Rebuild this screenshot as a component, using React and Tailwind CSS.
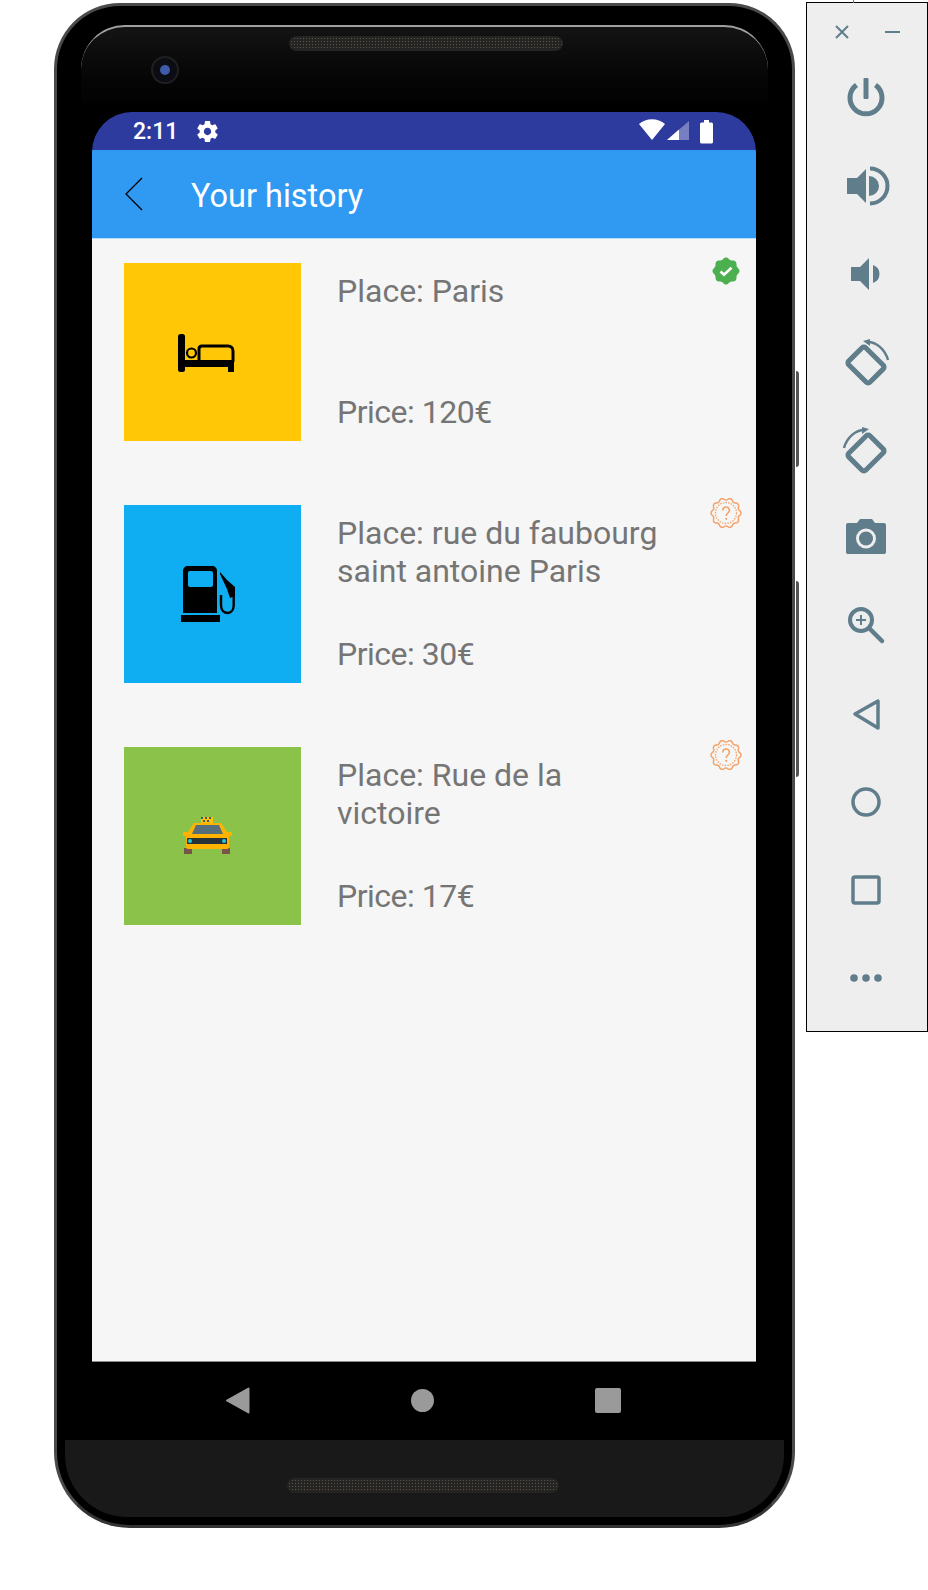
const font = { roboto: 'font-["Roboto",sans-serif]' };

function BedIcon() {
  return (
    <svg width="84" height="84" viewBox="0 0 84 84">
      <rect x="7" y="24" width="7" height="38" rx="2.500" fill="#000" />
      <path d="M12 50H63V62H57V57H12Z" fill="#000" />
      <circle cx="20.500" cy="43" r="4.500" fill="none" stroke="#000" stroke-width="2.200" />
      <path d="M28 51V39C28 37 29 36 31 36H57C60 36 62 38 62 41V52" fill="none" stroke="#000" stroke-width="3" />
    </svg>
  );
}

function PumpIcon() {
  return (
    <svg width="84" height="84" viewBox="0 0 84 84">
      <path fill-rule="evenodd" d="M17 14H41C44 14 46 16 46 19V61H12V19C12 16 14 14 17 14ZM19 19C17.900 19 17 19.900 17 21V33C17 34.100 17.900 35 19 35H40C41.100 35 42 34.100 42 33V21C42 19.900 41.100 19 40 19Z" fill="#000" />
      <rect x="10" y="63" width="39" height="7" fill="#000" />
      <path d="M49 20L56 28L64 35V44L59 46L56 37L49 22Z" fill="#000" />
      <path d="M62.700 44V53C62.700 58 60 61 56.700 61C53 61 50 58 50 53V43" fill="none" stroke="#000" stroke-width="2.400" />
    </svg>
  );
}

function TaxiIcon() {
  return (
    <svg width="84" height="84" viewBox="0 0 84 84">
      <rect x="13" y="54" width="8" height="6" fill="#795548" />
      <rect x="51" y="54" width="8" height="6" fill="#795548" />
      <rect x="30" y="23" width="12" height="6" fill="#ffc107" />
      <path d="M30 23h2v2h-2zM34 23h2v2h-2zM38 23h2v2h-2zM32 26h2v2h-2zM36 26h2v2h-2z" fill="#455a64" />
      <path d="M23 29H50L56 38H60C61.500 38 61.500 42 60 42H58V53C58 54 57 55 56 55H17C16 55 15 54 15 53V42H13C11.500 42 11.500 38 13 38H17Z" fill="#ffb300" />
      <path d="M25 31H48L52 40H21Z" fill="#546e7a" />
      <rect x="16" y="44" width="40" height="6" fill="#263238" />
      <circle cx="19" cy="47" r="2" fill="#26c6da" />
      <circle cx="53" cy="47" r="2" fill="#26c6da" />
    </svg>
  );
}

function badgePath(cx, cy, r, lobes, depth) {
  let d = '';
  for (let i = 0; i <= 120; i++) {
    const a = (i / 120) * Math.PI * 2;
    const rr = r + depth * Math.cos(a * lobes);
    d += `${i ? 'L' : 'M'}${(cx + rr * Math.cos(a)).toFixed(2)} ${(cy + rr * Math.sin(a)).toFixed(2)}`;
  }
  return d + 'Z';
}

function DoneBadge() {
  return (
    <svg width="30" height="30" viewBox="0 0 30 30">
      <path d={badgePath(15, 15, 12.600, 8, 0.900)} fill="#4caf50" />
      <path d="M9.500 15.500L13 18.800L20.500 11.800" fill="none" stroke="#fff" stroke-width="2.600" />
    </svg>
  );
}

function PendingBadge() {
  return (
    <svg width="34" height="34" viewBox="0 0 34 34">
      <path d={badgePath(17, 17, 14, 10, 1)} fill="none" stroke="#f4a26a" stroke-width="1.500" />
      <circle cx="17" cy="17" r="10.500" fill="none" stroke="#f4a26a" stroke-width="1.300" stroke-dasharray="1.500 1.200" />
      <path d="M13.800 14.500C13.800 9.800 20.400 10 20.400 14.300C20.400 17 17.200 17 17.200 20" fill="none" stroke="#f4a26a" stroke-width="1.600" />
      <circle cx="17.200" cy="22.800" r="1.100" fill="#f4a26a" />
    </svg>
  );
}

const rows = [
  { place: 'Place: Paris', price: 'Price: 120€', color: 'bg-[#ffc706]', icon: <BedIcon />, badge: <DoneBadge /> },
  { place: 'Place: rue du faubourg saint antoine Paris', price: 'Price: 30€', color: 'bg-[#0fadf1]', icon: <PumpIcon />, badge: <PendingBadge /> },
  { place: 'Place: Rue de la victoire', price: 'Price: 17€', color: 'bg-[#8bc34a]', icon: <TaxiIcon />, badge: <PendingBadge /> },
];

function HistoryRow({ row }) {
  return (
    <div className="flex h-[177.500px] items-start">
      <div className={`flex h-full w-[177px] shrink-0 items-center justify-center ${row.color}`}>{row.icon}</div>
      <div className="ml-[36px] flex h-full w-[330px] flex-col justify-between pt-[10px] pb-[9px] text-[32px] leading-[37.500px] text-[#757575]">
        <div>{row.place}</div>
        <div className="tracking-[-0.5px]">{row.price}</div>
      </div>
      <div className="-mt-[9px] ml-[42px] flex h-[34px] w-[34px] items-center justify-center">{row.badge}</div>
    </div>
  );
}

function StatusBar() {
  return (
    <div className="flex h-[38px] shrink-0 items-center justify-between bg-[#2e3b9e] pl-[41px] pr-[43px] text-white">
      <div className="flex items-center">
        <span className="text-[23px] font-medium leading-none">2:11</span>
        <svg className="ml-[17px]" width="25" height="25" viewBox="0 0 24 24" fill="#fff">
          <path d="M19.430 12.980c.04-.32.07-.64.07-.98s-.03-.66-.07-.98l2.110-1.650c.19-.15.24-.42.12-.64l-2-3.460c-.12-.22-.39-.3-.61-.22l-2.490 1c-.52-.4-1.080-.73-1.690-.98l-.38-2.650C14.460 2.180 14.250 2 14 2h-4c-.25 0-.46.18-.49.42l-.38 2.650c-.61.25-1.170.59-1.690.98l-2.490-1c-.23-.09-.49 0-.61.22l-2 3.460c-.13.22-.07.49.12.64l2.110 1.650c-.04.32-.07.65-.07.98s.03.66.07.98l-2.110 1.650c-.19.15-.24.42-.12.64l2 3.460c.12.22.39.3.61.22l2.490-1c.52.4 1.080.73 1.690.98l.38 2.650c.03.24.24.42.49.42h4c.25 0 .46-.18.49-.42l.38-2.650c.61-.25 1.170-.59 1.690-.98l2.490 1c.23.09.49 0 .61-.22l2-3.460c.12-.22.07-.49-.12-.64l-2.110-1.650zM12 15.500c-1.930 0-3.500-1.570-3.500-3.500s1.570-3.500 3.500-3.500 3.500 1.570 3.500 3.500-1.570 3.500-3.500 3.500z" />
        </svg>
      </div>
      <svg width="74" height="26" viewBox="0 0 74 26">
        <path d="M0 6C7 -0.500 19 -0.500 26 6L13 22Z" fill="#fff" />
        <path d="M28 22L50 3V22Z" fill="#fff" fill-opacity="0.350" />
        <path d="M28 22L40 11.500V22Z" fill="#fff" />
        <path d="M61 6C61 5 62 4.500 63 4.500H65V2H70V4.500H72C73 4.500 74 5 74 6V24C74 25 73 25.500 72 25.500H63C62 25.500 61 25 61 24Z" fill="#fff" />
      </svg>
    </div>
  );
}

function NavBar() {
  return (
    <div className="flex h-[79px] shrink-0 items-center justify-center gap-[159px] border-t border-[#8a8a8a] bg-black pb-[2px] pr-[3px]">
      <svg width="26" height="27" viewBox="0 0 26 27">
        <path d="M2 13.500L23.500 1.500V25.500Z" fill="#9a9a9a" stroke="#9a9a9a" stroke-width="2" stroke-linejoin="round" />
      </svg>
      <div className="mx-[1.500px] h-[23px] w-[23px] rounded-full bg-[#9a9a9a]" />
      <div className="h-[25px] w-[26px] rounded-[2px] bg-[#9a9a9a]" />
    </div>
  );
}

function Speaker({ className }) {
  return (
    <div className={`h-[15px] rounded-full border border-[#242424] bg-[#2c2a27] bg-[radial-gradient(#5c5850_1px,#262422_1px)] bg-[length:3px_3px] ${className}`} />
  );
}

function Phone() {
  return (
    <div className="relative ml-[54px] mt-[3px] h-[1525px] w-[741px] shrink-0">
      <div className="absolute right-[-4px] top-[368px] h-[96px] w-[3px] rounded-r bg-[#555555]" />
      <div className="absolute right-[-4px] top-[578px] h-[196px] w-[3px] rounded-r bg-[#555555]" />
      <div className="relative flex h-full flex-col overflow-hidden rounded-t-[66px] rounded-b-[76px] border-[3px] border-[#4a4a4a] border-b-[#333333] bg-black pl-[35px] pr-[36px]">
        <div className="absolute inset-x-[24px] top-[19px] h-[78px] rounded-t-[44px] border-t-2 border-[#a0a0a0] bg-gradient-to-b from-[#141414] to-[#020202]" />
        <div className="absolute inset-x-[8px] bottom-[8px] h-[77px] rounded-b-[62px] bg-[#191919]" />

        <div className="relative flex h-[106px] shrink-0 items-center">
          <div className="absolute left-[59px] top-[50px] flex h-[28px] w-[28px] items-center justify-center rounded-full border-2 border-[#202020] bg-[#0c0c14]">
            <div className="h-[10px] w-[10px] rounded-full bg-[#3f5aa8]" />
          </div>
          <Speaker className="absolute left-[197px] top-[30px] w-[274px]" />
        </div>

        <div className="relative flex h-[1328px] shrink-0 flex-col overflow-hidden rounded-[40px] bg-black">
          <StatusBar />
          <div className="flex h-[89px] shrink-0 items-center border-b border-[#b9dcf8] bg-[#309af2] pl-[33px] pt-[4px] text-[32.500px] text-white">
            <svg className="-mt-[4px]" width="18" height="34" viewBox="0 0 18 34">
              <path d="M17 1L1 17L17 33" fill="none" stroke="#000" stroke-width="1.300" />
            </svg>
            <span className="ml-[48px]">Your history</span>
          </div>
          <div className="flex flex-1 flex-col gap-[64.500px] bg-[#f6f6f6] pl-[32px] pt-[24px]">
            {rows.map((row) => (
              <HistoryRow key={row.place} row={row} />
            ))}
          </div>
          <NavBar />
        </div>

        <div className="relative flex-1">
          <Speaker className="absolute left-[195px] top-[38px] w-[272px]" />
        </div>
      </div>
    </div>
  );
}

const ink = '#607d8b';

function Box({ children }) {
  return (
    <div className="flex h-[88px] items-center justify-center">
      <svg width="48" height="48" viewBox="0 0 48 48" fill={ink}>
        {children}
      </svg>
    </div>
  );
}

function SidePanel() {
  return (
    <div className="relative ml-[11px] mt-[2px] h-[1030px] w-[122px] shrink-0 self-start border border-black bg-[#eeeeee]">
      <div className="absolute left-[46px] top-[-3px] h-[3px] w-[1px] bg-[#777]" />
      <div className="flex h-[51px] items-center justify-between pl-[27px] pr-[27px] pt-[7px]">
        <svg width="16" height="16" viewBox="0 0 16 16">
          <path d="M2 2L14 14M14 2L2 14" stroke={ink} stroke-width="2" />
        </svg>
        <div className="h-[2px] w-[15px] bg-[#607d8b]" />
      </div>
      <div className="pr-[3px]">
        <Box>
          <path d="M14.500 11A16 16 0 1 0 33.500 11" fill="none" stroke={ink} stroke-width="5" />
          <rect x="21.500" y="4" width="5" height="21" rx="1" />
        </Box>
        <Box>
          <path d="M5 16H15L24 7V41L15 32H5Z" />
          <path d="M27 14A10 10 0 0 1 27 34Z" />
          <path d="M28 6.500A17.500 17.500 0 0 1 28 41.500" fill="none" stroke={ink} stroke-width="4" />
        </Box>
        <Box>
          <path d="M9 17H18L27 8V40L18 31H9Z" />
          <path d="M31 15A9.500 9.500 0 0 1 31 33Z" />
        </Box>
        <Box>
          <rect x="9" y="15" width="30" height="24" rx="2.500" transform="rotate(45 24 27)" fill="none" stroke={ink} stroke-width="5" />
          <path d="M26 4C34 4 43 11 46 22" fill="none" stroke={ink} stroke-width="2.500" />
          <path d="M21 3L28 1V8Z" />
        </Box>
        <Box>
          <rect x="9" y="15" width="30" height="24" rx="2.500" transform="rotate(-45 24 27)" fill="none" stroke={ink} stroke-width="5" />
          <path d="M22 4C14 4 5 11 2 22" fill="none" stroke={ink} stroke-width="2.500" />
          <path d="M27 3L20 1V8Z" />
        </Box>
        <Box>
          <path fill-rule="evenodd" d="M6 9H15L18 5H30L33 9H42C43.500 9 44 10 44 11V38C44 39.500 43 40 42 40H6C5 40 4 39.500 4 38V11C4 10 4.500 9 6 9ZM24 14.500A10 10 0 1 0 24 34.500A10 10 0 1 0 24 14.500ZM24 17.500A7 7 0 1 1 24 31.500A7 7 0 1 1 24 17.500Z" />
          <circle cx="24" cy="24.500" r="6.500" />
        </Box>
        <Box>
          <circle cx="19" cy="18" r="11" fill="none" stroke={ink} stroke-width="4" />
          <path d="M27 26L40 39" stroke={ink} stroke-width="4.500" stroke-linecap="round" />
          <path d="M19 13V23M14 18H24" stroke={ink} stroke-width="2" />
        </Box>
        <Box>
          <path d="M13 24L36 11V38Z" fill="none" stroke={ink} stroke-width="3.500" stroke-linejoin="round" />
        </Box>
        <Box>
          <circle cx="24" cy="24" r="13" fill="none" stroke={ink} stroke-width="3.500" />
        </Box>
        <Box>
          <rect x="11" y="11" width="26" height="26" rx="2" fill="none" stroke={ink} stroke-width="3.500" />
        </Box>
        <Box>
          <circle cx="12" cy="24" r="3.800" />
          <circle cx="24" cy="24" r="3.800" />
          <circle cx="36" cy="24" r="3.800" />
        </Box>
      </div>
    </div>
  );
}

export default function App() {
  return (
    <div className={`flex h-[1590px] w-[928px] overflow-hidden bg-white ${font.roboto}`}>
      <Phone />
      <SidePanel />
    </div>
  );
}
